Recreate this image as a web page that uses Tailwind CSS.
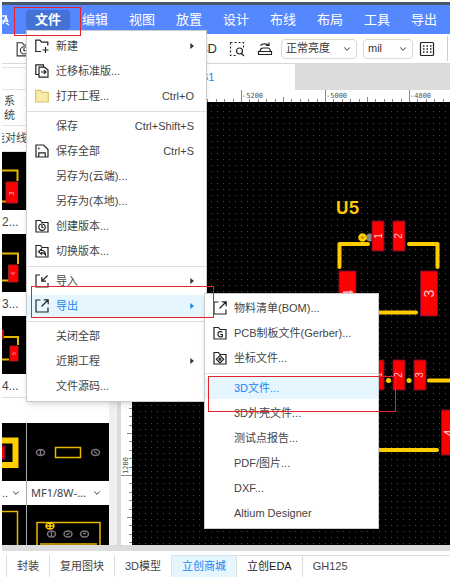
<!DOCTYPE html>
<html lang="zh-CN">
<head>
<meta charset="utf-8">
<title>PCB 编辑器</title>
<script src="https://cdn.jsdelivr.net/npm/@tailwindcss/browser@4"></script>
</head>
<body class="relative flex h-screen flex-col overflow-hidden bg-white px-0.5 pt-0.5 font-['Liberation_Sans','Noto_Sans_CJK_SC',sans-serif] text-[11px] text-[#444]">

<svg class="hidden" aria-hidden="true">
  <defs>
    <g id="folder"><path d="M1 13V1.500h4.500l1.500 2h6V13z"/></g>
    <symbol id="i-new" viewBox="0 0 14 14"><path d="M6 12.500H.8V1.200h4.200l1.500 2h6.300v3.300M10.500 8v6M7.500 11h6" /></symbol>
    <symbol id="i-migrate" viewBox="0 0 14 14"><path d="M4 10.500H.8V.8h7.700V3M4 3.200h5.500L13 6v7.200H4zM6 8h5M8.800 5.800L11 8l-2.200 2.200"/></symbol>
    <symbol id="i-open" viewBox="0 0 14 14"><path d="M.7 13V1.300h5l1.300 2h6.300V13z" fill="#f8eba8" stroke="#d9c46c"/></symbol>
    <symbol id="i-save" viewBox="0 0 14 14"><path d="M1 13V1h7.500L13 5.500V13zM3.800 13V8.800h6.400V13M3.800 3.500v2"/></symbol>
    <symbol id="i-create" viewBox="0 0 14 14"><use href="#folder"/><circle cx="7" cy="8.200" r="3.200"/><path d="M7 6v2.500h1.500"/></symbol>
    <symbol id="i-switch" viewBox="0 0 14 14"><use href="#folder"/><path d="M6.500 5L3.500 7.700l3 2.500V8.600c2 0 3 .6 4 2.400 0-3-1.500-4.500-4-4.600z"/></symbol>
    <symbol id="i-import" viewBox="0 0 14 14"><path d="M5 1H1v12h12V9M12.500 1.500L7 7M6.800 3v4.200H11"/></symbol>
    <symbol id="i-export" viewBox="0 0 14 14"><path d="M5.500 1H1v12h12V8.500M6.500 7.500L13 1M8.800.8h4.400v4.400"/></symbol>
    <symbol id="i-gerber" viewBox="0 0 14 14"><use href="#folder"/><path d="M9.300 6.400C7.800 4.800 4.900 5.500 4.900 8.200c0 2.800 3 3.400 4.500 2V8.500H7.300"/></symbol>
    <symbol id="i-coord" viewBox="0 0 14 14"><use href="#folder"/><path d="M7 4.500L10.700 8.200 7 12 3.300 8.200z"/><circle cx="7" cy="8.200" r="1"/></symbol>
    <symbol id="i-find" viewBox="0 0 16 16"><path d="M1.500 1.500h13v5M1.500 1.500v13H7" stroke-dasharray="2 2"/><circle cx="10.500" cy="10" r="3"/><path d="M12.500 12.500l2.500 2.500"/></symbol>
    <symbol id="i-iron" viewBox="0 0 16 16"><path d="M3 10c.5-2.300 1.500-3 3-3h5.500c1 0 1.500 1.500 2 3M1.500 10.500h13v3h-13zM3.500 4.500c2-2 5-2 8-.5M12 1.500V4.500H9"/></symbol>
    <symbol id="i-grid" viewBox="0 0 16 16"><rect x="1.500" y="1.500" width="13" height="13" rx="1"/><path d="M4 5h9M4 8h9M4 11h9" stroke-width="1.500" stroke-dasharray="1.500 2"/></symbol>
    <symbol id="i-chev" viewBox="0 0 8 8"><path d="M1.200 2.500L4 5.300l2.800-2.800"/></symbol>
    <symbol id="i-tri" viewBox="0 0 4 8"><path d="M.3 1L4 4 .3 7z" fill="currentColor" stroke="none"/></symbol>
  </defs>
</svg>

<header>
  <div class="h-[3px] bg-[#46566c]"></div>
  <nav class="flex h-[29px] items-center gap-[3px] bg-[#5588ff] text-[13px] text-white">
    <a href="#" aria-label="主页" class="mr-[13px] w-2"><svg class="h-4 w-2" viewBox="0 0 8 16" fill="none" stroke="#fff" stroke-width="1.500"><path d="M0 4h5M1 12l3-7 2 5M0 9h5M4 11l3 2"/></svg></a>
    <button class="h-5 w-11 rounded-sm bg-[#4472d4] font-bold">文件</button>
    <button class="h-5 w-11">编辑</button>
    <button class="h-5 w-11">视图</button>
    <button class="h-5 w-11">放置</button>
    <button class="h-5 w-11">设计</button>
    <button class="h-5 w-11">布线</button>
    <button class="h-5 w-11">布局</button>
    <button class="h-5 w-11">工具</button>
    <button class="h-5 w-11">导出</button>
  </nav>
  <div class="flex h-[30px] items-center border-b border-[#d8d8d8] text-[#333]">
    <button aria-label="工程版本" class="ml-3.5"><svg class="size-4 fill-none stroke-[#333]"><use href="#i-create"/></svg></button>
    <div class="ml-auto flex items-center">
      <button class="mr-3 text-[13px]">3D</button>
      <button aria-label="查找区域" class="mr-3"><svg class="size-4 fill-none stroke-[#222] stroke-[1.2]"><use href="#i-find"/></svg></button>
      <button aria-label="铺铜" class="mr-2"><svg class="size-4 fill-none stroke-[#222] stroke-[1.2]"><use href="#i-iron"/></svg></button>
      <div class="relative mr-1.5">
        <select aria-label="亮度" class="h-5 w-[76px] appearance-none rounded-sm border border-[#d9d9d9] bg-white pl-1"><option>正常亮度</option></select>
        <svg class="pointer-events-none absolute top-1.5 right-1.5 size-2 fill-none stroke-[#333]"><use href="#i-chev"/></svg>
      </div>
      <div class="relative mr-1.5">
        <select aria-label="单位" class="h-5 w-[50px] appearance-none rounded-sm border border-[#d9d9d9] bg-white pl-1"><option>mil</option></select>
        <svg class="pointer-events-none absolute top-1.5 right-1.5 size-2 fill-none stroke-[#333]"><use href="#i-chev"/></svg>
      </div>
      <button aria-label="网格" class="mr-3"><svg class="size-4 fill-none stroke-[#222] stroke-[1.2]"><use href="#i-grid"/></svg></button>
      <div class="mr-0.5 h-[25px] w-px bg-[#ccc]"></div>
    </div>
  </div>
</header>

<main class="flex min-h-0 flex-1">
  <aside class="flex w-[107px] shrink-0 flex-col overflow-hidden">
    <div class="h-1 shrink-0 border-b border-[#e3e3e3]"></div>
    <div class="h-[22px] shrink-0 border-b border-[#e3e3e3]"></div>
    <div class="flex h-9 shrink-0 items-center border-b border-[#e3e3e3]"><span class="w-[15px] text-center leading-[14px]">系统</span></div>
    <div class="flex h-[26px] shrink-0 items-center overflow-hidden border-b border-[#e3e3e3] whitespace-nowrap"><span class="-ml-2">能对线</span></div>
    <div class="grid shrink-0 grid-cols-[24px_1fr] gap-x-px text-xs">
      <svg class="h-[58px] w-full bg-black" viewBox="2 152 24 58" fill="none" stroke="#e8b800" stroke-width="2"><path d="M2 170.500H17.500V181M2 201.500H6"/><path d="M6 182h11.500v21H6z" fill="red" stroke="#a02020" stroke-width="1"/><text x="0" y="0" transform="translate(14 195.500) rotate(-90)" font-size="7" fill="#fbb" stroke="none">3</text></svg>
      <div></div>
      <div class="col-span-2 flex h-6 items-center">2...</div>
      <svg class="h-[58px] w-full bg-black" viewBox="2 234 24 58" fill="none" stroke="#e8b800" stroke-width="2"><path d="M2 253.500H18V264M2 280.500H8"/><path d="M8.500 265H18v17H8.500z" fill="red" stroke="#a02020" stroke-width="1"/><text transform="translate(15 275) rotate(-90)" font-size="5" fill="#fbb" stroke="none">4</text></svg>
      <div></div>
      <div class="col-span-2 flex h-6 items-center">3...</div>
      <svg class="h-[58px] w-full bg-black" viewBox="2 316 24 58" fill="none" stroke="#e8b800" stroke-width="2"><path d="M4 337H18V345M2 359.500H9"/><path d="M10 346h8v15h-8zM2 330h1.500v9H2z" fill="red" stroke="#a02020" stroke-width="1"/><text transform="translate(16 355) rotate(-90)" font-size="5" fill="#fbb" stroke="none">5</text></svg>
      <div></div>
      <div class="col-span-2 flex h-6 items-center border-b border-[#ddd]">4...</div>
    </div>
    <div class="mt-[25px] grid shrink-0 grid-cols-[24px_1fr] gap-x-px bg-[#aaa]">
      <svg class="h-[58px] w-full bg-black" viewBox="2 423 24 58" fill="none"><path d="M-10 440.500H15.500V465H-10" stroke="#fc0" stroke-width="6"/><path d="M-2 446h7v13h-7z" fill="red" stroke="#603" stroke-width="1.500"/></svg>
      <svg class="h-[58px] w-full bg-black" viewBox="27 423 82 58" fill="none" stroke="#7d7480" stroke-width="1.500"><path d="M55.500 447.500h25v10h-25z" stroke="#e8b800"/><ellipse cx="40.500" cy="452.500" rx="4" ry="3"/><ellipse cx="95.500" cy="452.500" rx="4" ry="3"/><path d="M40.500 450v5M94 451.500l3 2"/></svg>
      <div class="flex h-6 items-center gap-1 bg-white">..<svg class="ml-auto mr-1.5 size-2 fill-none stroke-[#333]"><use href="#i-chev"/></svg></div>
      <div class="flex h-6 items-center bg-white pl-1"><span class="font-['Noto_Sans',sans-serif]">MF1/8W-...</span><svg class="ml-auto mr-2 size-2 fill-none stroke-[#333]"><use href="#i-chev"/></svg></div>
      <svg class="h-[58px] w-full bg-black" viewBox="2 505 24 58" fill="none" stroke="#e8b800" stroke-width="1.500"><path d="M2 511.500H17.500V570"/></svg>
      <svg class="h-[58px] w-full bg-black" viewBox="27 505 82 58" fill="none" stroke="#7d7480" stroke-width="1.500"><path d="M37 570V522.500h63V570M40 544h57" stroke="#e8b800"/><ellipse cx="50" cy="526" rx="4" ry="3" stroke="#fc0"/><path d="M46 526h8M50 523v6" stroke="#fc0"/><ellipse cx="51.500" cy="534" rx="4" ry="3"/><ellipse cx="68" cy="534" rx="4" ry="3"/><ellipse cx="84.500" cy="534" rx="4" ry="3"/><path d="M51.500 532v4M66.500 535l3-2M83 533.500h3"/></svg>
    </div>
  </aside>
  <div class="w-2 shrink-0 bg-[#f0f0f0]"></div>
  <div class="w-1 shrink-0 bg-[#dcdcdc]"></div>

  <section class="flex min-w-0 flex-1 flex-col">
    <div class="flex h-[26px] shrink-0 bg-[#dcdcdc]">
      <button class="w-[174px] bg-white pr-4 text-center text-[#1a86ff]">PCB1</button>
    </div>
    <svg class="h-3 w-full shrink-0" viewBox="121 90 329 12" preserveAspectRatio="xMinYMin slice">
      <defs>
        <pattern id="ticks-x" x="241" y="90" width="84" height="12" patternUnits="userSpaceOnUse"><path d="M.5 0v12M42.500 7v5M8.500 9v3M17.500 9v3M25.500 9v3M34.500 9v3M50.500 9v3M59.500 9v3M67.500 9v3M76.500 9v3" stroke="#888"/></pattern>
      </defs>
      <rect x="121" y="90" width="2000" height="12" fill="#fff"/>
      <rect x="121" y="90" width="2000" height="12" fill="url(#ticks-x)"/>
      <g font-size="7" fill="#555" font-family="'DejaVu Sans Mono',monospace"><text x="242" y="98">-5200</text><text x="326" y="98">-5000</text><text x="410" y="98">-4800</text></g>
    </svg>
    <div class="flex min-h-0 flex-1">
      <svg class="h-full w-[11px] shrink-0" viewBox="121 102 11 443" preserveAspectRatio="xMinYMin slice">
        <defs>
          <pattern id="ticks-y" x="121" y="391" width="11" height="84" patternUnits="userSpaceOnUse"><path d="M0 .5h11M6 42.500h5M8 8.500h3M8 17.500h3M8 25.500h3M8 34.500h3M8 50.500h3M8 59.500h3M8 67.500h3M8 76.500h3" stroke="#888"/></pattern>
        </defs>
        <rect x="121" y="102" width="11" height="2000" fill="url(#ticks-y)"/>
        <text transform="translate(128 474) rotate(-90)" font-size="7" fill="#555" font-family="'DejaVu Sans Mono',monospace">1200</text>
      </svg>
      <svg class="h-full min-w-0 flex-1 bg-black" viewBox="132 102 318 443" preserveAspectRatio="xMinYMin slice" font-family="'Liberation Sans',sans-serif">
        <defs>
          <pattern id="dots" x="133" y="105" width="6" height="6" patternUnits="userSpaceOnUse"><rect width="1" height="1" fill="#4a4a4a"/></pattern>
        </defs>
        <rect x="132" y="102" width="2000" height="2000" fill="url(#dots)"/>
        <text x="336" y="214" font-size="17" font-weight="700" fill="#fc0" font-family="Inter,sans-serif">U5</text>
        <circle cx="370" cy="237.500" r="4" fill="#888"/>
        <g fill="none" stroke="#fc0" stroke-width="4" stroke-linecap="round" stroke-linejoin="round">
          <path d="M368 244H339.500V267M409 244H437.500V267M360 312.500H416M429 380.500H470M370 450H437"/>
          <path d="M388.500 380.500h.1M409 380.500h.1" stroke-width="5"/>
        </g>
        <circle cx="362.500" cy="237.500" r="2.800" fill="#a80" stroke="#fc0" stroke-width="3"/>
        <path d="M372 221h12v30h-12zM393 221h12v30h-12zM339 271h17v45h-17zM420.500 271h17v45h-17zM372 360h12v30h-12zM393 360h12v30h-12zM414 360h12v30h-12zM441.500 410h17v45h-17z" fill="red" stroke="#701030" stroke-width="1"/>
        <g fill="#ffc4c4" text-anchor="middle">
          <g font-size="10">
            <text transform="translate(381.500 236) rotate(-90)">1</text>
            <text transform="translate(402 236) rotate(-90)">2</text>
            <text transform="translate(381.500 375) rotate(-90)">1</text>
            <text transform="translate(402 375) rotate(-90)">2</text>
            <text transform="translate(423 375) rotate(-90)">3</text>
          </g>
          <g font-size="14">
            <text transform="translate(353 293.500) rotate(-90)">4</text>
            <text transform="translate(433.500 293.500) rotate(-90)">3</text>
            <text transform="translate(454 433) rotate(-90)">4</text>
          </g>
        </g>
      </svg>
    </div>
  </section>
</main>

<footer class="shrink-0">
  <div class="h-1.5 bg-[#dcdcdc]"></div>
  <div class="mt-1 flex h-[22px] pl-1">
    <button class="border-l border-[#ddd] px-2.5">封装</button>
    <button class="border-l border-[#ddd] px-2.5">复用图块</button>
    <button class="border-l border-[#ddd] px-2.5">3D模型</button>
    <button class="border-t border-l border-[#d5e6f2] bg-[#e6f6ff] px-2.5 text-[#1a86f0]">立创商城</button>
    <button class="border-t border-l border-[#ddd] px-2.5 text-[#222]">立创EDA</button>
    <button class="flex-1 border-t border-l border-[#ddd] px-2.5 text-left">GH125</button>
  </div>
</footer>

<ul class="absolute top-[30px] left-[26px] flex w-[181px] flex-col gap-[3px] border border-[#ccc] bg-white pt-1 pb-1 shadow-md" role="menu">
  <li><button class="flex h-[22px] w-full items-center pr-3 pl-2"><svg class="mr-[7px] size-3.5 fill-none stroke-[#222] stroke-[1.2]"><use href="#i-new"/></svg>新建<svg class="ml-auto h-2 w-1 text-[#333]"><use href="#i-tri"/></svg></button></li>
  <li><button class="flex h-[22px] w-full items-center pr-3 pl-2"><svg class="mr-[7px] size-3.5 fill-none stroke-[#222] stroke-[1.2]"><use href="#i-migrate"/></svg>迁移标准版...</button></li>
  <li><button class="flex h-[22px] w-full items-center pr-3 pl-2"><svg class="mr-[7px] size-3.5 fill-none stroke-[#222] stroke-[1.2]"><use href="#i-open"/></svg>打开工程...<span class="ml-auto">Ctrl+O</span></button></li>
  <li class="mt-px h-px bg-[#ddd]" role="separator"></li>
  <li><button class="flex h-[22px] w-full items-center pr-3 pl-[29px]">保存<span class="ml-auto">Ctrl+Shift+S</span></button></li>
  <li><button class="flex h-[22px] w-full items-center pr-3 pl-2"><svg class="mr-[7px] size-3.5 fill-none stroke-[#222] stroke-[1.2]"><use href="#i-save"/></svg>保存全部<span class="ml-auto">Ctrl+S</span></button></li>
  <li><button class="flex h-[22px] w-full items-center pr-3 pl-[29px]">另存为(云端)...</button></li>
  <li><button class="flex h-[22px] w-full items-center pr-3 pl-[29px]">另存为(本地)...</button></li>
  <li><button class="flex h-[22px] w-full items-center pr-3 pl-2"><svg class="mr-[7px] size-3.5 fill-none stroke-[#222] stroke-[1.2]"><use href="#i-create"/></svg>创建版本...</button></li>
  <li><button class="flex h-[22px] w-full items-center pr-3 pl-2"><svg class="mr-[7px] size-3.5 fill-none stroke-[#222] stroke-[1.2]"><use href="#i-switch"/></svg>切换版本...</button></li>
  <li class="mt-px h-px bg-[#ddd]" role="separator"></li>
  <li><button class="flex h-[22px] w-full items-center pr-3 pl-2"><svg class="mr-[7px] size-3.5 fill-none stroke-[#222] stroke-[1.2]"><use href="#i-import"/></svg>导入<svg class="ml-auto h-2 w-1 text-[#333]"><use href="#i-tri"/></svg></button></li>
  <li><button class="flex h-[22px] w-full items-center bg-[#e6f6ff] pr-3 pl-2 text-[#1a86f0]"><svg class="mr-[7px] size-3.5 fill-none stroke-[#222] stroke-[1.2]"><use href="#i-export"/></svg>导出<svg class="ml-auto h-2 w-1"><use href="#i-tri"/></svg></button></li>
  <li class="mt-px h-px bg-[#ddd]" role="separator"></li>
  <li><button class="flex h-[22px] w-full items-center pr-3 pl-[29px]">关闭全部</button></li>
  <li><button class="flex h-[22px] w-full items-center pr-3 pl-[29px]">近期工程<svg class="ml-auto h-2 w-1 text-[#333]"><use href="#i-tri"/></svg></button></li>
  <li><button class="flex h-[22px] w-full items-center pr-3 pl-[29px]">文件源码...</button></li>
</ul>

<ul class="absolute top-[293px] left-[204px] flex w-[175px] flex-col gap-[3px] border border-[#ccc] bg-white pt-[3px] pb-1 shadow-md" role="menu">
  <li><button class="flex h-[22px] w-full items-center pl-2"><svg class="mr-[7px] size-3.5 fill-none stroke-[#222] stroke-[1.2]"><use href="#i-export"/></svg>物料清单(BOM)...</button></li>
  <li><button class="flex h-[22px] w-full items-center pl-2"><svg class="mr-[7px] size-3.5 fill-none stroke-[#222] stroke-[1.2]"><use href="#i-gerber"/></svg>PCB制板文件(Gerber)...</button></li>
  <li><button class="flex h-[22px] w-full items-center pl-2"><svg class="mr-[7px] size-3.5 fill-none stroke-[#222] stroke-[1.2]"><use href="#i-coord"/></svg>坐标文件...</button></li>
  <li class="mt-px h-px bg-[#ddd]" role="separator"></li>
  <li><button class="flex h-[22px] w-full items-center bg-[#e6f6ff] pl-[29px] text-[#1a86f0]">3D文件...</button></li>
  <li><button class="flex h-[22px] w-full items-center pl-[29px]">3D外壳文件...</button></li>
  <li><button class="flex h-[22px] w-full items-center pl-[29px]">测试点报告...</button></li>
  <li><button class="flex h-[22px] w-full items-center pl-[29px]">PDF/图片...</button></li>
  <li><button class="flex h-[22px] w-full items-center pl-[29px]">DXF...</button></li>
  <li><button class="flex h-[22px] w-full items-center pl-[29px]">Altium Designer</button></li>
</ul>

<div class="pointer-events-none absolute top-[7px] left-3.5 h-[29px] w-[67px] border border-[#e8202c]"></div>
<div class="pointer-events-none absolute top-[286px] left-[31px] h-8 w-[183px] border border-[#e8202c]"></div>
<div class="pointer-events-none absolute top-[376px] left-[208px] h-9 w-[188px] border border-[#e8202c]"></div>
</body>
</html>
